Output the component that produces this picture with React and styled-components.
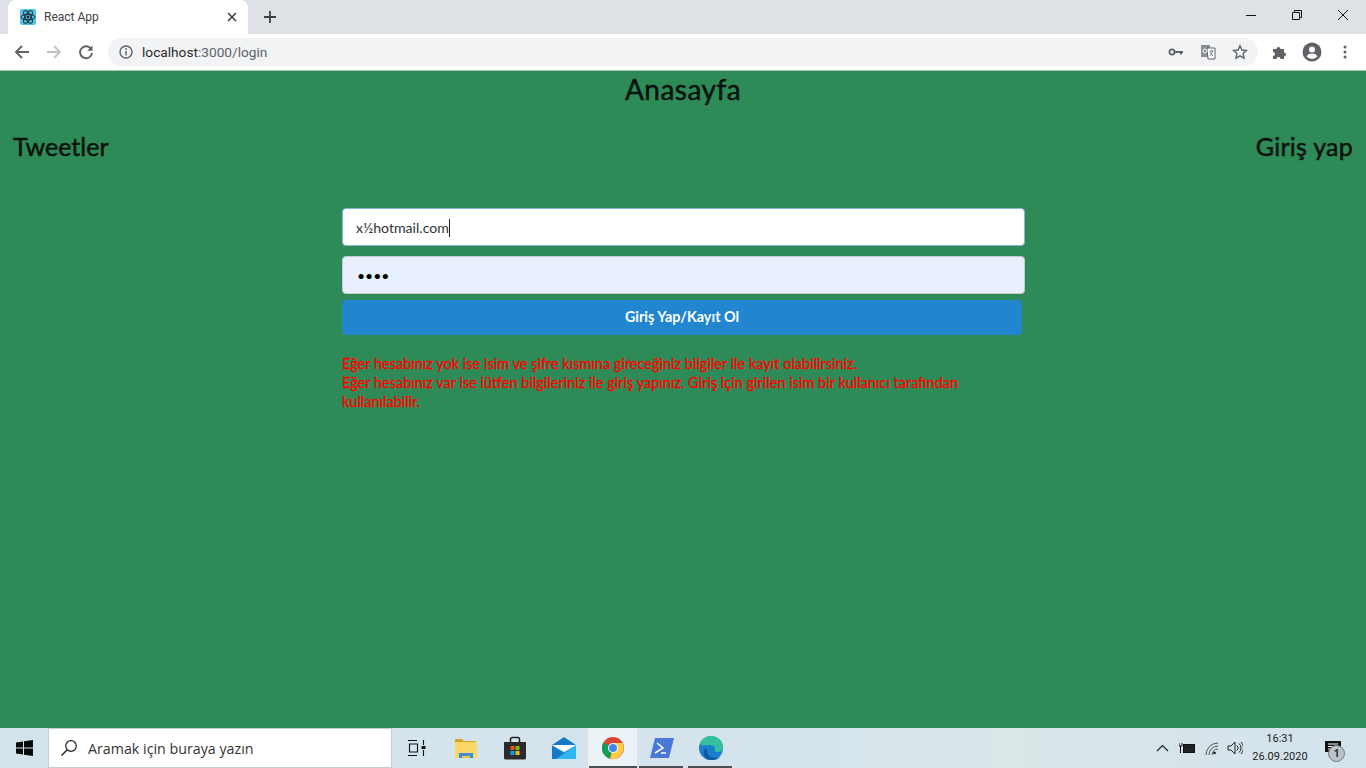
import React from "react";
import styled, { createGlobalStyle } from "styled-components";

const Global = createGlobalStyle`
  html, body { margin: 0; padding: 0; height: 100%; overflow: hidden; }
  * { box-sizing: border-box; }
  body { font-family: "Lato", sans-serif; }
`;
const Screen = styled.div`width:1366px;height:768px;display:flex;flex-direction:column;overflow:hidden;`;
const TabStrip = styled.div`height:34px;background:#dee1e6;display:flex;align-items:flex-end;padding-left:8px;flex:none;`;
const Tab = styled.div`
  width:240px;height:34px;background:#fff;border-radius:8px 8px 0 0;display:flex;align-items:center;
  padding:0 8px 0 12px;font:12px "Roboto","Open Sans",sans-serif;color:#3c4043;gap:8px;
`;
const TabTitle = styled.span`flex:1;`;
const IconBtn = styled.button`
  border:0;background:none;padding:0;display:flex;align-items:center;justify-content:center;
  width:${p=>p.$w||24}px;height:${p=>p.$h||24}px;flex:none;
`;
const NewTab = styled(IconBtn)`margin:0 0 5px 10px;`;
const Spacer = styled.div`flex:1;`;
const WinControls = styled.div`display:flex;align-self:flex-start;`;
const WinBtn = styled(IconBtn)`width:46px;height:29px;`;
const Toolbar = styled.div`height:36px;background:#fff;display:flex;align-items:center;padding:0 8px 0 10px;flex:none;`;
const Nav = styled.div`display:flex;gap:8px;margin-right:10px;`;
const Omni = styled.div`
  flex:1;height:28px;background:#f1f3f4;border-radius:14px;display:flex;align-items:center;
  padding:0 6px 0 11px;font:13.7px "Roboto",sans-serif;color:#5f6368;
`;
const Host = styled.span`color:#2a2b2e;`;
const Url = styled.span`margin-left:9px;`;
const OmniIcons = styled.div`display:flex;gap:8px;align-items:center;`;
const Ext = styled.div`display:flex;gap:8px;margin-left:10px;`;
const Line = styled.div`height:1px;background:#a9c4b5;flex:none;`;
const Page = styled.main`flex:1;background:#2e8b57;display:flex;flex-direction:column;color:#0a120d;min-height:0;`;
const Title = styled.h1`margin:0;text-align:center;font:400 28px/36px "Lato",sans-serif;letter-spacing:.5px;-webkit-text-stroke:.5px #0a120d;`;
const HeadRow = styled.div`display:flex;justify-content:space-between;padding:0 13px;margin-top:21px;`;
const NavTitle = styled.h2`margin:0;font:400 25px/36px "Lato",sans-serif;color:#0a120d;-webkit-text-stroke:.5px #0a120d;letter-spacing:${p=>p.$ls||0}px;`;
const Form = styled.form`width:683px;margin:44px 0 0 342px;display:flex;flex-direction:column;`;
const Input = styled.input`
  width:100%;height:38px;border:1px solid #c3cad4;border-radius:4px;background:#e8f0fe;
  padding:0 14px;font:14px "Lato",sans-serif;color:#000;outline:none;margin-bottom:6px;
`;
const Caret = styled.span`display:inline-block;width:1px;height:18px;background:#222;vertical-align:-4px;`;
const FieldText = styled.div`
  height:38px;border:1px solid #85b7d9;border-radius:4px;background:#fff;padding:0 13px;margin-bottom:10px;
  font:14.1px/37px "Lato",sans-serif;color:#333;
`;
const Submit = styled.button`
  width:680px;height:35px;border:0;border-radius:4px;background:#2185d0;color:#fff;font:700 14.4px "Lato",sans-serif;padding:0 0 2px;
`;
const Note = styled.p`
  width:640px;margin:19px 0 0;color:#f00;font:400 14.5px/19px "Lato",sans-serif;-webkit-text-stroke:.3px #f00;
`;
const Taskbar = styled.footer`
  height:40px;flex:none;display:flex;align-items:center;
  background:linear-gradient(90deg,#d3e3ec 0%,#d5e4ec 60%,#dbe6e8 74%,#d7e4ea 85%,#d3e3ec 100%);
`;
const Start = styled.div`width:48px;height:40px;display:flex;align-items:center;justify-content:center;flex:none;`;
const Search = styled.div`
  width:344px;height:40px;background:#fff;border:1px solid #c3cfd6;display:flex;align-items:center;
  padding-left:11px;gap:10px;font:14.25px "Open Sans",sans-serif;color:#333;flex:none;
`;
const TaskIcons = styled.div`display:flex;height:40px;`;
const TaskItem = styled.div`
  width:49px;height:40px;display:flex;align-items:center;justify-content:center;position:relative;
  background:${p=>p.$active?"#eaf2f6":"transparent"};
  &::after{
    content:"";position:absolute;bottom:0;height:2px;background:#4a4f52;
    display:${p=>p.$open?"block":"none"};
    left:${p=>p.$active?1:2}px;right:${p=>p.$active?0:3}px;
  }
`;
const Tray = styled.div`margin-left:auto;display:flex;align-items:center;height:40px;`;
const TrayIcons = styled.div`display:flex;align-items:center;gap:10px;margin-right:8px;`;
const Volume = styled.span`display:flex;margin-left:-2px;`;
const Clock = styled.div`text-align:center;font:11px/18px "Roboto",sans-serif;color:#222;width:58px;margin-right:9px;`;
const Notif = styled.div`width:30px;height:40px;display:flex;align-items:center;justify-content:center;position:relative;margin-right:18px;`;
const Badge = styled.span`
  position:absolute;left:10px;top:17px;width:17px;height:17px;border-radius:50%;background:#b9c4ca;border:1px solid #777;
  font:700 10px/15px "Open Sans",sans-serif;text-align:center;color:#333;
`;

const S = ({w=16,h=16,vb,children,...r}) => <svg width={w} height={h} viewBox={vb||`0 0 ${w} ${h}`} fill="none" {...r}>{children}</svg>;

export default function App(){
  return (<>
    <Global/>
    <Screen>
      <TabStrip>
        <Tab>
          <S w={16} h={16}>
            <rect width="16" height="16" rx="2" fill="#4fc3e8"/>
            <g stroke="#1d2a33" strokeWidth="1" fill="none">
              <ellipse cx="8" cy="8" rx="7" ry="2.8"/>
              <ellipse cx="8" cy="8" rx="7" ry="2.8" transform="rotate(60 8 8)"/>
              <ellipse cx="8" cy="8" rx="7" ry="2.8" transform="rotate(120 8 8)"/>
            </g>
            <circle cx="8" cy="8" r="1.4" fill="#1d2a33"/>
          </S>
          <TabTitle>React App</TabTitle>
          <IconBtn $w={16} $h={16}><S w={16} h={16}><path d="M4 4l8 8M12 4l-8 8" stroke="#3c4043" strokeWidth="1.6"/></S></IconBtn>
        </Tab>
        <NewTab><S w={16} h={16}><path d="M8 2v12M2 8h12" stroke="#3c4043" strokeWidth="1.8"/></S></NewTab>
        <Spacer/>
        <WinControls>
          <WinBtn><S w={12} h={12}><path d="M1 6.5h10" stroke="#111"/></S></WinBtn>
          <WinBtn><S w={12} h={12}><path d="M1.5 3.5h7v7h-7zM3.5 3.5v-2h7v7h-2" stroke="#111"/></S></WinBtn>
          <WinBtn><S w={12} h={12}><path d="M1 1l10 10M11 1L1 11" stroke="#111"/></S></WinBtn>
        </WinControls>
      </TabStrip>
      <Toolbar>
        <Nav>
          <IconBtn><S w={16} h={16}><path d="M15 8H2M8 2L2 8l6 6" stroke="#5f6368" strokeWidth="1.9"/></S></IconBtn>
          <IconBtn><S w={16} h={16}><path d="M1 8h13M8 2l6 6-6 6" stroke="#bdc1c6" strokeWidth="1.9"/></S></IconBtn>
          <IconBtn><S w={16} h={16}><path d="M13.2 5.2A6 6 0 1 0 14 9" stroke="#5f6368" strokeWidth="1.9"/><path d="M14.5 1.5v5.2H9.3z" fill="#5f6368"/></S></IconBtn>
        </Nav>
        <Omni>
          <S w={14} h={14}><circle cx="7" cy="7" r="6" stroke="#5f6368" strokeWidth="1.4"/><path d="M7 6v4.2" stroke="#5f6368" strokeWidth="1.5"/><circle cx="7" cy="4" r=".9" fill="#5f6368"/></S>
          <Url><Host>localhost</Host>:3000/login</Url>
          <Spacer/>
          <OmniIcons>
            <IconBtn><S w={16} h={16}><circle cx="4" cy="8" r="2.6" stroke="#5f6368" strokeWidth="1.8"/><path d="M6.5 7h8.5v2h-1v1.6h-2V9H6.5z" fill="#5f6368"/></S></IconBtn>
            <IconBtn><S w={16} h={16}><rect x="1" y="1" width="9" height="12" fill="#8a8f94"/><path d="M7 4h8v11H8z" fill="#fff" stroke="#5f6368"/><path d="M9.5 7h4M11.5 6v1M10 12l3-5M10 8l3 4" stroke="#5f6368" strokeWidth=".8"/><circle cx="5" cy="7" r="2" stroke="#fff"/></S></IconBtn>
            <IconBtn><S w={16} h={16}><path d="M8 1.8l1.9 4.2 4.6.5-3.4 3.1.9 4.6L8 11.9l-4 2.3.9-4.6L1.5 6.5 6.100 6z" stroke="#5f6368" strokeWidth="1.4"/></S></IconBtn>
          </OmniIcons>
        </Omni>
        <Ext>
          <IconBtn><S w={16} h={16}><path d="M1 5h3.500a2 2 0 1 1 4 0H12v3.500a2 2 0 1 1 0 4V15H8.500a2 2 0 1 0-4 0H1v-3a2 2 0 1 0 0-4z" fill="#5f6368"/></S></IconBtn>
          <IconBtn><S w={20} h={20}><circle cx="10" cy="10" r="9.500" fill="#5f6368"/><circle cx="10" cy="7.500" r="3" fill="#fff"/><path d="M4.500 14.200c1.300-2 3.400-2.700 5.500-2.700s4.200.7 5.500 2.700A7 7 0 0 1 10 17a7 7 0 0 1-5.500-2.800z" fill="#fff"/></S></IconBtn>
          <IconBtn $w={26}><S w={4} h={16}><circle cx="2" cy="3" r="1.500" fill="#5f6368"/><circle cx="2" cy="8" r="1.500" fill="#5f6368"/><circle cx="2" cy="13" r="1.500" fill="#5f6368"/></S></IconBtn>
        </Ext>
      </Toolbar>
      <Line/>
      <Page>
        <Title>Anasayfa</Title>
        <HeadRow><NavTitle>Tweetler</NavTitle><NavTitle $ls={.25}>Giriş yap</NavTitle></HeadRow>
        <Form onSubmit={e=>e.preventDefault()}>
          <FieldText>x½hotmail.com<Caret/></FieldText>
          <Input type="password" readOnly defaultValue="1234"/>
          <Submit type="button">Giriş Yap/Kayıt Ol</Submit>
          <Note>Eğer hesabınız yok ise isim ve şifre kısmına gireceğiniz bilgiler ile kayıt olabilirsiniz.<br/>Eğer hesabınız var ise lütfen bilgileriniz ile giriş yapınız. Giriş için girilen isim bir kullanıcı tarafından kullanılabilir.</Note>
        </Form>
      </Page>
      <Taskbar>
        <Start><S w={17} h={16}><path d="M0 2.400L7 1.400V7.500H0zM8 1.300L17 0V7.500H8zM0 8.500H7V14.600L0 13.600zM8 8.500H17V16L8 14.700z" fill="#0a0a0a"/></S></Start>
        <Search>
          <S w={18} h={18}><circle cx="11" cy="7" r="5.300" stroke="#222" strokeWidth="1.200"/><path d="M7 11l-5.500 5.500" stroke="#222" strokeWidth="1.400"/></S>
          Aramak için buraya yazın
        </Search>
        <TaskIcons>
          <TaskItem><S w={18} h={16}><path d="M0 .5h9M0 15.500h9M1.500 4h8v8h-8zM15.500 0v5M15.500 10v6" stroke="#111" strokeWidth="1.100"/><rect x="13.500" y="6" width="4" height="3" fill="#111"/></S></TaskItem>
          <TaskItem><S w={22} h={20}><path d="M0 2a1 1 0 0 1 1-1h6l2 2h12v4H0z" fill="#d9a520"/><rect y="4" width="22" height="16" rx="1" fill="#fbd768"/><path d="M4 15h14v5h-3v-2H7v2H4z" fill="#3a8fd6"/><rect x="7" y="18" width="8" height="2" fill="#f2c442"/></S></TaskItem>
          <TaskItem><S w={24} h={24}><path d="M7.500 7V3.500a2 2 0 0 1 2-2h5a2 2 0 0 1 2 2V7" stroke="#222" strokeWidth="1.500"/><path d="M1 6h22v16a1.500 1.500 0 0 1-1.500 1.500h-19A1.500 1.500 0 0 1 1 22z" fill="#2b2b2b"/><rect x="7.500" y="10" width="4" height="4" fill="#f25022"/><rect x="12.500" y="10" width="4" height="4" fill="#7fba00"/><rect x="7.500" y="15" width="4" height="4" fill="#00a4ef"/><rect x="12.500" y="15" width="4" height="4" fill="#ffb900"/></S></TaskItem>
          <TaskItem><S w={24} h={22}><path d="M0 8L12 0l12 8v14H0z" fill="#1679c9"/><path d="M0 8h24L12 15z" fill="#fff"/><path d="M24 8v14H4z" fill="#2fb5ef"/><path d="M0 8l12 7 12-7" stroke="#d8eefa" strokeWidth=".6"/></S></TaskItem>
          <TaskItem $active $open>
            <S w={22} h={22}>
              <circle cx="11" cy="11" r="11" fill="#db4437"/>
              <path d="M11 11L1.500 5.500A11 11 0 0 0 8 21.600z" fill="#0f9d58"/>
              <path d="M11 6h9.500A11 11 0 0 1 8 21.600L11 11z" fill="#ffcd40"/>
              <circle cx="11" cy="11" r="5" fill="#fff"/><circle cx="11" cy="11" r="4" fill="#4285f4"/>
            </S>
          </TaskItem>
          <TaskItem $open><S w={24} h={20}><path d="M5 0h19l-5 20H0z" fill="#4a78d8"/><path d="M7 5l6 5-8 5" stroke="#fff" strokeWidth="1.500"/><path d="M11 15h5" stroke="#fff" strokeWidth="1.500"/></S></TaskItem>
          <TaskItem $open>
            <S w={24} h={24}>
              <circle cx="12" cy="12" r="12" fill="#1b7fcb"/>
              <path d="M1 8C3 2 8 0 12 0c7 0 12 5 12 11 0 3-2 5-6 5-2 0-3-1-2-2 1-2-1-5-5-5C6 9 3 10 1 8z" fill="#35c1a0"/>
              <path d="M8 14c0 5 4 8 9 8 2 0 4-1 5-2-3 4-7 4-10 4C5 24 3 18 6 12c1 0 2 1 2 2z" fill="#0f5aa8"/>
            </S>
          </TaskItem>
        </TaskIcons>
        <Tray>
          <TrayIcons>
            <S w={13} h={8}><path d="M1 7l5.500-5.500L12 7" stroke="#222" strokeWidth="1.200"/></S>
            <S w={16} h={12}><path d="M0 1v3h3V1M1.500 4v7" stroke="#111"/><rect x="4.500" y="2.500" width="11" height="8" fill="#222" stroke="#111"/></S>
            <S w={14} h={13}><path d="M1 13A12 12 0 0 1 13 1M4 13a9 9 0 0 1 9-9M7 13a6 6 0 0 1 6-6" stroke="#555"/><circle cx="9.500" cy="11" r="1.300" fill="#111"/></S>
            <Volume><S w={16} h={14}><path d="M1 5h3l4-4v12L4 9H1z" stroke="#222"/><path d="M10 4.500a3.500 3.500 0 0 1 0 5M12 2.500a6 6 0 0 1 0 9M14 1a8.500 8.500 0 0 1 0 12" stroke="#222"/></S></Volume>
          </TrayIcons>
          <Clock>16:31<br/>26.09.2020</Clock>
          <Notif>
            <S w={16} h={15}><path d="M0 0h16v11H8L4 15v-4H0z" fill="#111"/><path d="M3 3h10M3 5.500h10M3 8h7" stroke="#fff"/></S>
            <Badge>1</Badge>
          </Notif>
        </Tray>
      </Taskbar>
    </Screen>
  </>);
}
